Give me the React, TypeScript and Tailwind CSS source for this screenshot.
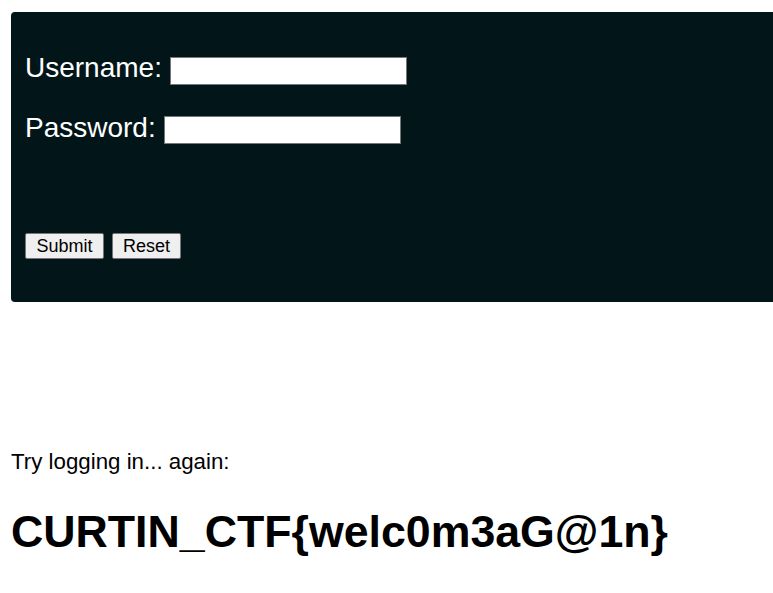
export default function App() {
  return (
    <div className="w-full min-h-[593px] overflow-hidden bg-white font-['Liberation_Sans',Arial,sans-serif] text-black">
      <form className="mt-[12px] ml-[11px] w-[900px] rounded-l-[4px] bg-[#021519] px-[14px] pt-[43px] pb-[43px]">
        <div className="flex h-[32px] items-center gap-[8px]">
          <label className="mb-[6px] text-[28px] leading-none text-white">Username:</label>
          <input type="text" className="h-[28px] w-[237px] border border-[#767676] bg-white" />
        </div>
        <div className="mt-[27px] flex h-[32px] items-center gap-[8px]">
          <label className="mb-[5px] text-[28px] leading-none text-white">Password:</label>
          <input type="password" className="h-[28px] w-[237px] border border-[#767676] bg-white" />
        </div>
        <div className="mt-[87px] flex gap-[8px]">
          <button type="button" className="h-[26px] w-[79px] rounded-[2px] border border-[#767676] bg-[#efefef] text-[18px] leading-none">
            Submit
          </button>
          <button type="button" className="h-[26px] w-[69px] rounded-[2px] border border-[#767676] bg-[#efefef] text-[18px] leading-none">
            Reset
          </button>
        </div>
      </form>
      <p className="mt-[147px] ml-[11px] text-[22.3px] leading-[26px]">Try logging in... again:</p>
      <h1 className="mt-[31px] ml-[11px] text-[44.7px] font-bold leading-[52px]">CURTIN_CTF{"{welc0m3aG@1n}"}</h1>
    </div>
  );
}
